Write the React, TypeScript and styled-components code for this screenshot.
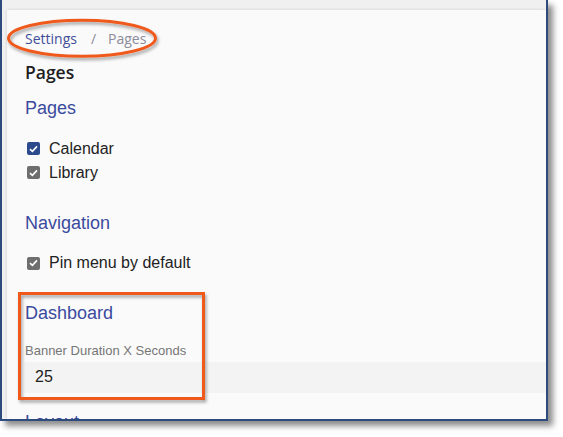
import React from "react";
import styled, { createGlobalStyle } from "styled-components";

const Global = createGlobalStyle`
  html, body { margin: 0; padding: 0; background: #ffffff; }
  body { font-family: "Liberation Sans", Arial, sans-serif; }
  * { box-sizing: border-box; }
`;

const Stage = styled.div`
  position: relative;
  width: 563px;
  height: 437px;
`;

const Frame = styled.div`
  width: 548px;
  height: 421px;
  border-left: 2px solid #2d4b7d;
  border-right: 2px solid #2d4b7d;
  border-bottom: 2px solid #2d4b7d;
  background: #f0f0f0;
  box-shadow: 5px 5px 6px rgba(0, 0, 0, 0.45);
  padding: 10px 0 0 5px;
  overflow: hidden;
  display: flex;
`;

const Panel = styled.div`
  flex: 1;
  background: #fafafa;
  box-shadow: 0 0 3px rgba(0, 0, 0, 0.14);
  padding: 19px 0 0 18px;
  display: flex;
  flex-direction: column;
  overflow: hidden;
`;

const Breadcrumb = styled.nav`
  display: flex;
  align-items: center;
  height: 20px;
  font-family: "Open Sans", sans-serif;
  font-size: 14px;
  line-height: 20px;
`;

const Crumb = styled.span<{ $current?: boolean }>`
  color: ${(p) => (p.$current ? "#8c8c9a" : "#3f4f98")};
`;

const Sep = styled.span`
  color: #8c8c9a;
  padding: 0 12px 0 14px;
`;

const PageTitle = styled.h1`
  margin: 11px 0 0;
  font-family: "Open Sans", sans-serif;
  font-weight: 600;
  font-size: 17.5px;
  line-height: 24px;
  color: #1e1e1e;
`;

const SectionTitle = styled.h2<{ $gap: number }>`
  margin: ${(p) => p.$gap}px 0 0;
  font-family: "Liberation Sans", Arial, sans-serif;
  font-weight: 400;
  font-size: 18px;
  line-height: 24px;
  color: #3a4a9e;
`;

const CheckList = styled.div`
  margin-top: 16.5px;
  display: flex;
  flex-direction: column;
`;

const CheckRow = styled.label`
  display: flex;
  align-items: center;
  height: 24px;
  gap: 9px;
  padding-left: 2px;
  font-size: 16px;
  line-height: 24px;
  color: #222222;
`;

const Box = styled.span<{ $tone: "blue" | "gray" }>`
  width: 13px;
  height: 13px;
  border-radius: 2px;
  background: ${(p) => (p.$tone === "blue" ? "#2d4a8c" : "#6e6e6e")};
  display: flex;
  align-items: center;
  justify-content: center;
  flex: none;
`;

const FieldLabel = styled.div`
  margin-top: 18px;
  font-size: 13px;
  line-height: 16px;
  color: #767676;
`;

const Input = styled.div`
  margin: 2.5px 0 0 -1px;
  height: 31px;
  background: #f3f3f3;
  display: flex;
  align-items: center;
  padding-left: 11px;
  font-size: 16px;
  color: #1e1e1e;
  flex: none;
`;

const Overlay = styled.svg`
  position: absolute;
  left: 0;
  top: 0;
  width: 563px;
  height: 437px;
  pointer-events: none;
  overflow: visible;
`;

const Check = ({ tone, label }: { tone: "blue" | "gray"; label: string }) => (
  <CheckRow>
    <Box $tone={tone}>
      <svg width="9" height="8" viewBox="0 0 9 8">
        <path d="M1 4.2 L3.4 6.4 L8 1.4" fill="none" stroke="#ffffff" strokeWidth="1.6" />
      </svg>
    </Box>
    {label}
  </CheckRow>
);

export default function App() {
  return (
    <Stage>
      <Global />
      <Frame>
        <Panel>
          <Breadcrumb>
            <Crumb>Settings</Crumb>
            <Sep>/</Sep>
            <Crumb $current>Pages</Crumb>
          </Breadcrumb>
          <PageTitle>Pages</PageTitle>
          <SectionTitle $gap={12}>Pages</SectionTitle>
          <CheckList>
            <Check tone="blue" label="Calendar" />
            <Check tone="gray" label="Library" />
          </CheckList>
          <SectionTitle $gap={26}>Navigation</SectionTitle>
          <CheckList>
            <Check tone="gray" label="Pin menu by default" />
          </CheckList>
          <SectionTitle $gap={26}>Dashboard</SectionTitle>
          <FieldLabel>Banner Duration X Seconds</FieldLabel>
          <Input>25</Input>
          <SectionTitle $gap={17}>Layout</SectionTitle>
        </Panel>
      </Frame>
      <Overlay>
        <defs>
          <filter id="sh" x="-20%" y="-20%" width="140%" height="160%">
            <feDropShadow dx="1.5" dy="2.5" stdDeviation="1.6" floodColor="#000" floodOpacity="0.35" />
          </filter>
        </defs>
        <ellipse cx="82" cy="38.2" rx="73.5" ry="18" fill="none" stroke="#ef5a1e" strokeWidth="3" filter="url(#sh)" />
        <rect x="19.5" y="293.5" width="184" height="105" fill="none" stroke="#ef5a1e" strokeWidth="3" filter="url(#sh)" />
      </Overlay>
    </Stage>
  );
}
